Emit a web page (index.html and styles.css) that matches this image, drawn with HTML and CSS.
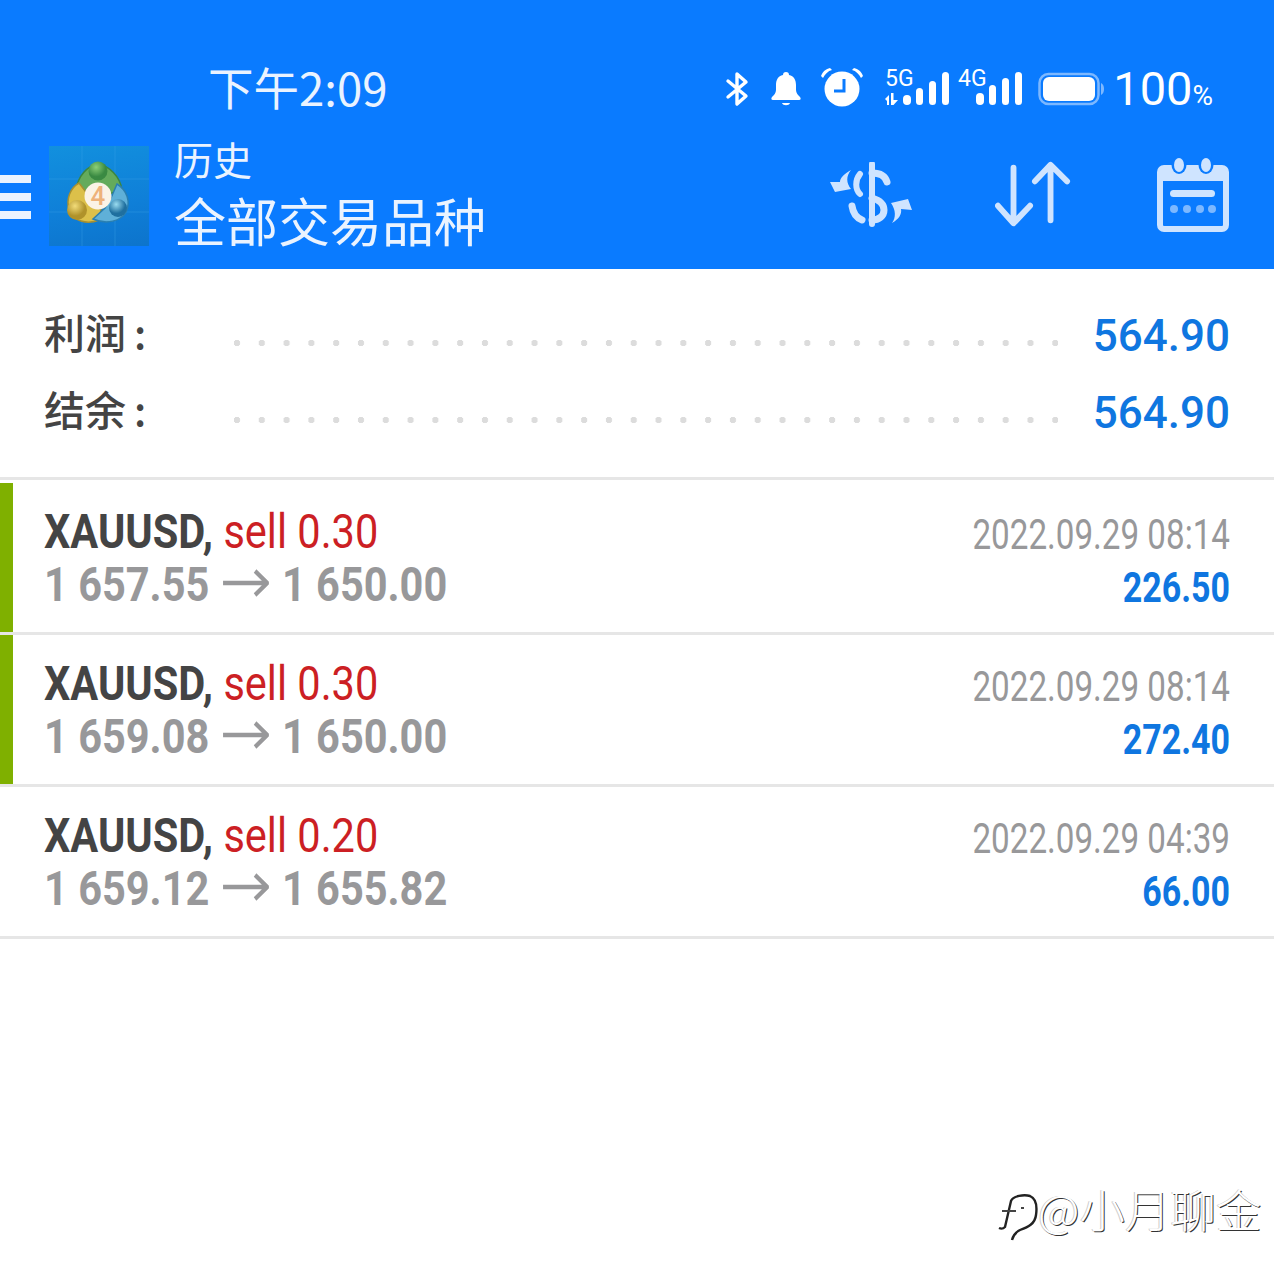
FILE: index.html
```html
<!DOCTYPE html>
<html lang="zh">
<head>
<meta charset="utf-8">
<title>历史</title>
<link rel="stylesheet" href="styles.css">
</head>
<body>
<div class="page">
  <header class="header">
    <div class="status">
      <div class="clock">下午2:09</div>
      <div class="status-icons">
        <svg class="ic" width="26" height="36" viewBox="0 0 26 36"><path d="M3 10 21 25 12 33V3L21 11 3 26" fill="none" stroke="#fff" stroke-width="3.4" stroke-linecap="round" stroke-linejoin="round"/></svg>
        <svg class="ic ic-bell" width="32" height="36" viewBox="0 0 32 36"><path d="M16 1c2 0 3 1 3 3 5 1 7 5 7 10v5c0 3 2 5 4 7 1 1 1 3-1 3H3c-2 0-2-2-1-3 2-2 4-4 4-7v-5c0-5 2-9 7-10 0-2 1-3 3-3z" fill="#fff"/><path d="M12 32h8c-1 3-7 3-8 0z" fill="#fff"/></svg>
        <svg class="ic ic-alarm" width="44" height="40" viewBox="0 0 44 40"><circle cx="22" cy="22" r="17.5" fill="#fff"/><path d="M1 9C3 4 6 2 10 1L12 3C8 4 5 7 3 11zM43 9C41 4 38 2 34 1L32 3C36 4 39 7 41 11z" fill="#fff"/><path d="M24 12v12h-10" fill="none" stroke="#0a7bff" stroke-width="3"/></svg>
        <svg class="ic ic-5g" width="66" height="38" viewBox="0 0 66 38"><text x="1" y="16" class="net">5G</text><path d="M1 29l4-4v10H3v-4zM7 23h2.5v7H14l-4.5 5H7z" fill="#fff"/><rect x="19" y="25" width="8" height="10" rx="4" fill="#fff"/><rect x="32" y="18" width="7" height="17" rx="3.5" fill="#fff"/><rect x="45" y="11" width="7" height="24" rx="3.5" fill="#fff"/><rect x="58" y="2" width="7" height="33" rx="3.5" fill="#fff"/></svg>
        <svg class="ic ic-4g" width="66" height="38" viewBox="0 0 66 38"><text x="0" y="16" class="net">4G</text><rect x="18" y="23" width="8" height="12" rx="4" fill="#fff"/><rect x="31" y="15" width="7" height="20" rx="3.5" fill="#fff"/><rect x="44" y="8" width="7" height="27" rx="3.5" fill="#fff"/><rect x="57" y="2" width="7" height="33" rx="3.5" fill="#fff"/></svg>
        <svg class="ic ic-batt" width="68" height="34" viewBox="0 0 68 34"><rect x="1.5" y="2" width="59" height="30" rx="9" fill="none" stroke="#7db8ff" stroke-width="2.5"/><rect x="5" y="5" width="52" height="24" rx="6" fill="#fff"/><path d="M63 11c2 1 3 3 3 6s-1 5-3 6z" fill="#7db8ff"/></svg>
        <div class="pct">100<span class="pct-sign">%</span></div>
      </div>
    </div>
    <div class="toolbar">
      <div class="burger"><span></span><span></span><span></span></div>
      <div class="logo">
        <svg width="100" height="100" viewBox="0 0 100 100">
          <defs>
            <radialGradient id="g1" cx=".4" cy=".3"><stop offset="0" stop-color="#8ccf78"/><stop offset="1" stop-color="#3a8a42"/></radialGradient>
            <radialGradient id="g2" cx=".4" cy=".3"><stop offset="0" stop-color="#f2dc7a"/><stop offset="1" stop-color="#b0922a"/></radialGradient>
            <radialGradient id="g3" cx=".4" cy=".3"><stop offset="0" stop-color="#9adcf0"/><stop offset="1" stop-color="#1f6f9f"/></radialGradient>
          </defs>
          <path d="M33 0V100M66 0V100M0 33H100M0 66H100" stroke="#3ea6ea" stroke-width="1" opacity=".35"/>
          <path d="M49 18C38 20 29 30 27 44L42 54 60 48 73 44C71 30 60 20 49 18z" fill="#64ab5c" stroke="#3c8640" stroke-width="1.5"/>
          <path d="M30 37C21 42 17 53 20 64 24 75 38 79 50 74L52 64 40 50z" fill="#dcc04a" stroke="#a89030" stroke-width="1.5"/>
          <path d="M68 38C78 44 82 56 77 66 72 75 58 79 44 73L56 62 62 52z" fill="#5fb0d8" stroke="#2a7fb0" stroke-width="1.5"/>
          <circle cx="49" cy="25" r="9.5" fill="url(#g1)"/>
          <circle cx="28" cy="64" r="10" fill="url(#g2)"/>
          <circle cx="69" cy="62" r="9" fill="url(#g3)"/>
          <circle cx="49" cy="50" r="13.5" fill="#fbf3e6"/>
          <text x="49" y="59" text-anchor="middle" class="logo-4">4</text>
        </svg>
      </div>
      <div class="titles">
        <div class="title-small">历史</div>
        <div class="title-big">全部交易品种</div>
      </div>
      <div class="actions">
        <svg width="84" height="66" viewBox="0 0 84 66"><g fill="none" stroke="#cfe4ff" stroke-linecap="round"><path d="M43 2V62" stroke-width="6"/><path d="M58 20C56 13 50 11 43 11" stroke-width="7"/><path d="M43 36C50 38 55 42 55 48S50 58 43 58" stroke-width="7"/><path d="M31 12C26 18 26 27 31 32" stroke-width="6"/><path d="M23 44C24 51 28 56 33 58" stroke-width="7"/></g><path d="M22 8C15 12 11 16 11 20L1 20 6 30 22 27C17 21 17 14 22 8zM63 61C70 57 73 52 72 47L83 48 79 37 62 41C67 48 67 56 63 61z" fill="#cfe4ff"/></svg>
        <svg class="updown" width="76" height="68" viewBox="0 0 78 68"><path d="M19 6V62M3 45 19 63 36 45M57 60V4M41 20 57 3 74 20" fill="none" stroke="#cfe4ff" stroke-width="6" stroke-linecap="round" stroke-linejoin="round"/></svg>
        <svg width="72" height="76" viewBox="0 0 72 76"><path d="M7 11h58a4 4 0 0 1 4 4v53a4 4 0 0 1-4 4H7a4 4 0 0 1-4-4V15a4 4 0 0 1 4-4z" fill="none" stroke="#cfe4ff" stroke-width="6"/><path d="M3 10h66v14H3z" fill="#cfe4ff"/><ellipse cx="22" cy="8" rx="7.5" ry="9" fill="#0a7bff"/><ellipse cx="49" cy="8" rx="7.5" ry="9" fill="#0a7bff"/><ellipse cx="22" cy="8" rx="5" ry="7" fill="#cfe4ff"/><ellipse cx="49" cy="8" rx="5" ry="7" fill="#cfe4ff"/><rect x="13" y="33" width="45" height="7" rx="3.5" fill="#cfe4ff"/><g fill="#7db8ff"><circle cx="17" cy="52" r="4"/><circle cx="30" cy="52" r="4"/><circle cx="43" cy="52" r="4"/><circle cx="55" cy="52" r="4"/></g></svg>
      </div>
    </div>
  </header>

  <section class="summary">
    <div class="sum-row"><span class="sum-label">利润<span class="colon">:</span></span><span class="dots"></span><span class="sum-value">564.90</span></div>
    <div class="sum-row"><span class="sum-label">结余<span class="colon">:</span></span><span class="dots"></span><span class="sum-value">564.90</span></div>
  </section>

  <section class="deals">
    <article class="deal win">
      <div class="deal-left">
        <div class="line1"><b class="sym">XAUUSD,</b> <span class="sell">sell 0.30</span></div>
        <div class="line2"><span>1 657.55</span><svg class="arrow" width="54" height="30" viewBox="0 0 54 30"><path d="M1 15H52M38 3 52 15 38 27" fill="none" stroke="#98989a" stroke-width="4.5"/></svg><span>1 650.00</span></div>
      </div>
      <div class="deal-right">
        <div class="time">2022.09.29 08:14</div>
        <div class="profit">226.50</div>
      </div>
    </article>
    <article class="deal win">
      <div class="deal-left">
        <div class="line1"><b class="sym">XAUUSD,</b> <span class="sell">sell 0.30</span></div>
        <div class="line2"><span>1 659.08</span><svg class="arrow" width="54" height="30" viewBox="0 0 54 30"><path d="M1 15H52M38 3 52 15 38 27" fill="none" stroke="#98989a" stroke-width="4.5"/></svg><span>1 650.00</span></div>
      </div>
      <div class="deal-right">
        <div class="time">2022.09.29 08:14</div>
        <div class="profit">272.40</div>
      </div>
    </article>
    <article class="deal">
      <div class="deal-left">
        <div class="line1"><b class="sym">XAUUSD,</b> <span class="sell">sell 0.20</span></div>
        <div class="line2"><span>1 659.12</span><svg class="arrow" width="54" height="30" viewBox="0 0 54 30"><path d="M1 15H52M38 3 52 15 38 27" fill="none" stroke="#98989a" stroke-width="4.5"/></svg><span>1 655.82</span></div>
      </div>
      <div class="deal-right">
        <div class="time">2022.09.29 04:39</div>
        <div class="profit">66.00</div>
      </div>
    </article>
  </section>

  <div class="watermark">
    <svg width="42" height="50" viewBox="0 0 42 50"><path d="M3 35C5 36 7 36 9 34L15 8C17 3 28 1 34 3 41 6 41 15 40 22 39 31 32 34 24 37 20 39 17 43 16 47" fill="none" stroke="#222" stroke-width="2.4"/><path d="M6 18H20M25 15H28" fill="none" stroke="#444" stroke-width="2"/></svg>
    <span>@小月聊金</span>
  </div>
</div>
</body>
</html>
```
FILE: styles.css
```css
* { box-sizing: border-box; }
html, body { margin: 0; padding: 0; background: #fff; }
.page {
  position: relative;
  width: 1274px;
  height: 1280px;
  overflow: hidden;
  font-family: Roboto, "Noto Sans CJK SC", sans-serif;
}
.header {
  height: 269px;
  background: #0a7bff;
  color: #fff;
  display: flex;
  flex-direction: column;
}
.status {
  height: 137px;
  padding: 62px 61px 0 208px;
  display: flex;
  justify-content: space-between;
  align-items: flex-start;
}
.clock {
  font-family: "Noto Sans CJK SC", sans-serif;
  font-size: 45.5px;
  line-height: 48px;
  font-weight: 400;
  color: #eaf3ff;
}
.status-icons { display: flex; align-items: center; height: 54px; }
.ic { display: block; flex: none; overflow: visible; }
.ic-bell { margin-left: 19px; }
.ic-alarm { margin-left: 18px; margin-top: -4px; }
.ic-5g { margin-left: 20px; }
.ic-4g { margin-left: 8px; }
.ic-batt { margin-left: 14px; }
.net { font-family: Roboto, sans-serif; font-size: 23px; fill: #fff; }
.pct { font-size: 47px; font-weight: 400; line-height: 54px; margin: 6px 0 0 7px; white-space: nowrap; }
.pct-sign { font-size: 28px; font-weight: 400; }
.toolbar { height: 132px; display: flex; align-items: flex-start; position: relative; }
.burger { width: 31px; margin-top: 38px; display: flex; flex-direction: column; gap: 10px; flex: none; }
.burger span { display: block; height: 8px; background: #eaf3ff; }
.logo {
  width: 100px; height: 100px; margin: 9px 0 0 18px; flex: none;
  background: linear-gradient(170deg, #1290de, #0f7fd8 60%, #0d74cc);
}
.logo svg { display: block; }
.logo-4 { font-family: Roboto, sans-serif; font-size: 26px; font-weight: 500; fill: #eeb27a; }
.titles { margin-left: 25px; display: flex; flex-direction: column; color: #eaf3ff; }
.title-small { font-family: "Noto Sans CJK SC", sans-serif; font-size: 39px; line-height: 50px; font-weight: 400; margin-top: -4px; }
.title-big { font-family: "Noto Sans CJK SC", sans-serif; font-size: 52px; line-height: 66px; font-weight: 400; margin-top: 4px; }
.actions { margin-left: auto; margin-right: 45px; display: flex; gap: 82px; align-items: center; height: 76px; margin-top: 20px; }
.actions svg { display: block; flex: none; }
.actions .updown { margin-right: 4px; }

.summary { height: 211px; padding: 28px 44px 0; border-bottom: 3px solid #e6e6e6; }
.sum-row { display: flex; align-items: center; height: 77px; }
.sum-label { width: 188px; flex: none; font-family: "Noto Sans CJK SC", sans-serif; font-size: 41px; font-weight: 500; line-height: 50px; margin-top: -10px; color: #444; white-space: nowrap; }
.colon { margin-left: 8px; }
.dots {
  flex: 1;
  height: 10px;
  margin-top: 14px;
  margin-right: 35px;
  background-image: radial-gradient(circle at 5px 5px, #dcdcdc 3px, transparent 3.5px);
  background-size: 24.8px 10px;
  background-repeat: repeat-x;
}
.sum-value { font-size: 44px; font-weight: 500; color: #0f76e0; line-height: 50px; }

.deals { padding-top: 3px; }
.deal {
  height: 152px;
  padding: 22px 44px 0;
  display: flex;
  justify-content: space-between;
  border-bottom: 3px solid #e6e6e6;
  position: relative;
  white-space: nowrap;
}
.deal.win::before {
  content: "";
  position: absolute;
  left: 0; top: 0; bottom: 0;
  width: 13px;
  background: #7fb000;
}
.deal-left, .deal-right { display: flex; flex-direction: column; }
.deal-left { transform: scaleX(0.865); transform-origin: left center; }
.deal-right { align-items: flex-end; transform: scaleX(0.79); transform-origin: right center; }
.line1 { font-size: 48px; line-height: 54px; }
.sym { font-weight: 700; color: #444; }
.sell { color: #cc1f24; }
.line2 { display: flex; align-items: center; font-size: 48px; line-height: 52px; font-weight: 700; color: #98989a; }
.arrow { display: block; flex: none; margin: -5px 15px 0 15px; }
.time { font-size: 42px; line-height: 52px; color: #98989a; margin-top: 4px; }
.profit { font-size: 43px; line-height: 52px; font-weight: 700; color: #0f76e0; }

.watermark {
  position: absolute;
  left: 996px;
  top: 1182px;
  display: flex;
  align-items: flex-start;
  color: #fff;
  font-family: "Noto Sans CJK SC", sans-serif;
  font-size: 45.5px;
  font-weight: 300;
  line-height: 52px;
  white-space: nowrap;
  text-shadow: 1px 1px 0 #333, -1px 0 0 #ccc;
}
.watermark svg { display: block; flex: none; margin-top: 11px; }
```
